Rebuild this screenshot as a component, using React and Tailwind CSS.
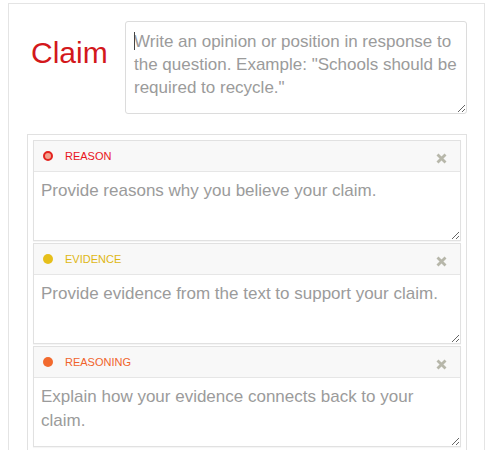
import React from 'react';

const parts = [
  {
    key: 'reason',
    label: 'REASON',
    labelColor: 'text-[#e8141c]',
    dot: 'bg-[#f2a38f] border-[2px] border-[#e3231f]',
    placeholder: 'Provide reasons why you believe your claim.',
  },
  {
    key: 'evidence',
    label: 'EVIDENCE',
    labelColor: 'text-[#dfb712]',
    dot: 'bg-[#e6bf1b]',
    placeholder: 'Provide evidence from the text to support your claim.',
  },
  {
    key: 'reasoning',
    label: 'REASONING',
    labelColor: 'text-[#f0632b]',
    dot: 'bg-[#f26a2e]',
    placeholder: 'Explain how your evidence connects back to your claim.',
  },
];

function CloseIcon() {
  return (
    <svg width="11" height="11" viewBox="0 0 11 11" className="block">
      <path d="M1.5 1.5 L9.5 9.5 M9.5 1.5 L1.5 9.5" stroke="#b7b7aa" strokeWidth="2.8" strokeLinecap="butt" />
    </svg>
  );
}

function PartCard({ part }) {
  return (
    <div className="border border-[#e1e1e1] bg-white shadow-[0_1px_1px_rgba(0,0,0,0.04)]">
      {/* header */}
      <div className="flex items-center h-[31px] border-b border-[#e6e6e6] bg-[#f8f8f8] pl-[9px] pr-[13px]">
        <span className={`w-[10px] h-[10px] rounded-full ${part.dot}`} />
        <span className={`ml-[12px] text-[11px] leading-none ${part.labelColor}`}>{part.label}</span>
        <span className="ml-auto mt-[5px]">
          <CloseIcon />
        </span>
      </div>
      <textarea
        placeholder={part.placeholder}
        className="block w-full h-[68px] resize-y outline-none px-[7px] pt-[7px] text-[17px] leading-[24px] text-[#333] placeholder:text-[#9b9b9b]"
      />
    </div>
  );
}

export default function App() {
  return (
    <div className="font-['Liberation_Sans',Arial,sans-serif] bg-white min-h-[450px] pt-[3px] pl-[8px]">
      <div className="w-[477px] border border-b-0 border-[#e4e4e4] pt-[17px] pl-[18px] pr-[17px] pb-[20px]">
        {/* Claim row */}
        <div className="flex">
          <div className="w-[98px] pl-[4px] mt-[17px] text-[30px] leading-[30px] text-[#d3181c]">Claim</div>
          <div className="relative">
            <textarea
              placeholder={'Write an opinion or position in response to the question. Example: "Schools should be required to recycle."'}
              className="block w-[342px] h-[93px] border border-[#dcdcdc] rounded-[3px] p-[8px] text-[17px] leading-[23px] text-[#333] outline-none placeholder:text-[#9b9b9b]"
            />
            <span className="absolute left-[9px] top-[11px] w-[1px] h-[18px] bg-[#444]" />
          </div>
        </div>

        {/* parts */}
        <div className="mt-[20px] border border-[#e1e1e1] p-[5px] flex flex-col gap-[2px]">
          {parts.map((p) => (
            <PartCard key={p.key} part={p} />
          ))}
        </div>
      </div>
    </div>
  );
}
